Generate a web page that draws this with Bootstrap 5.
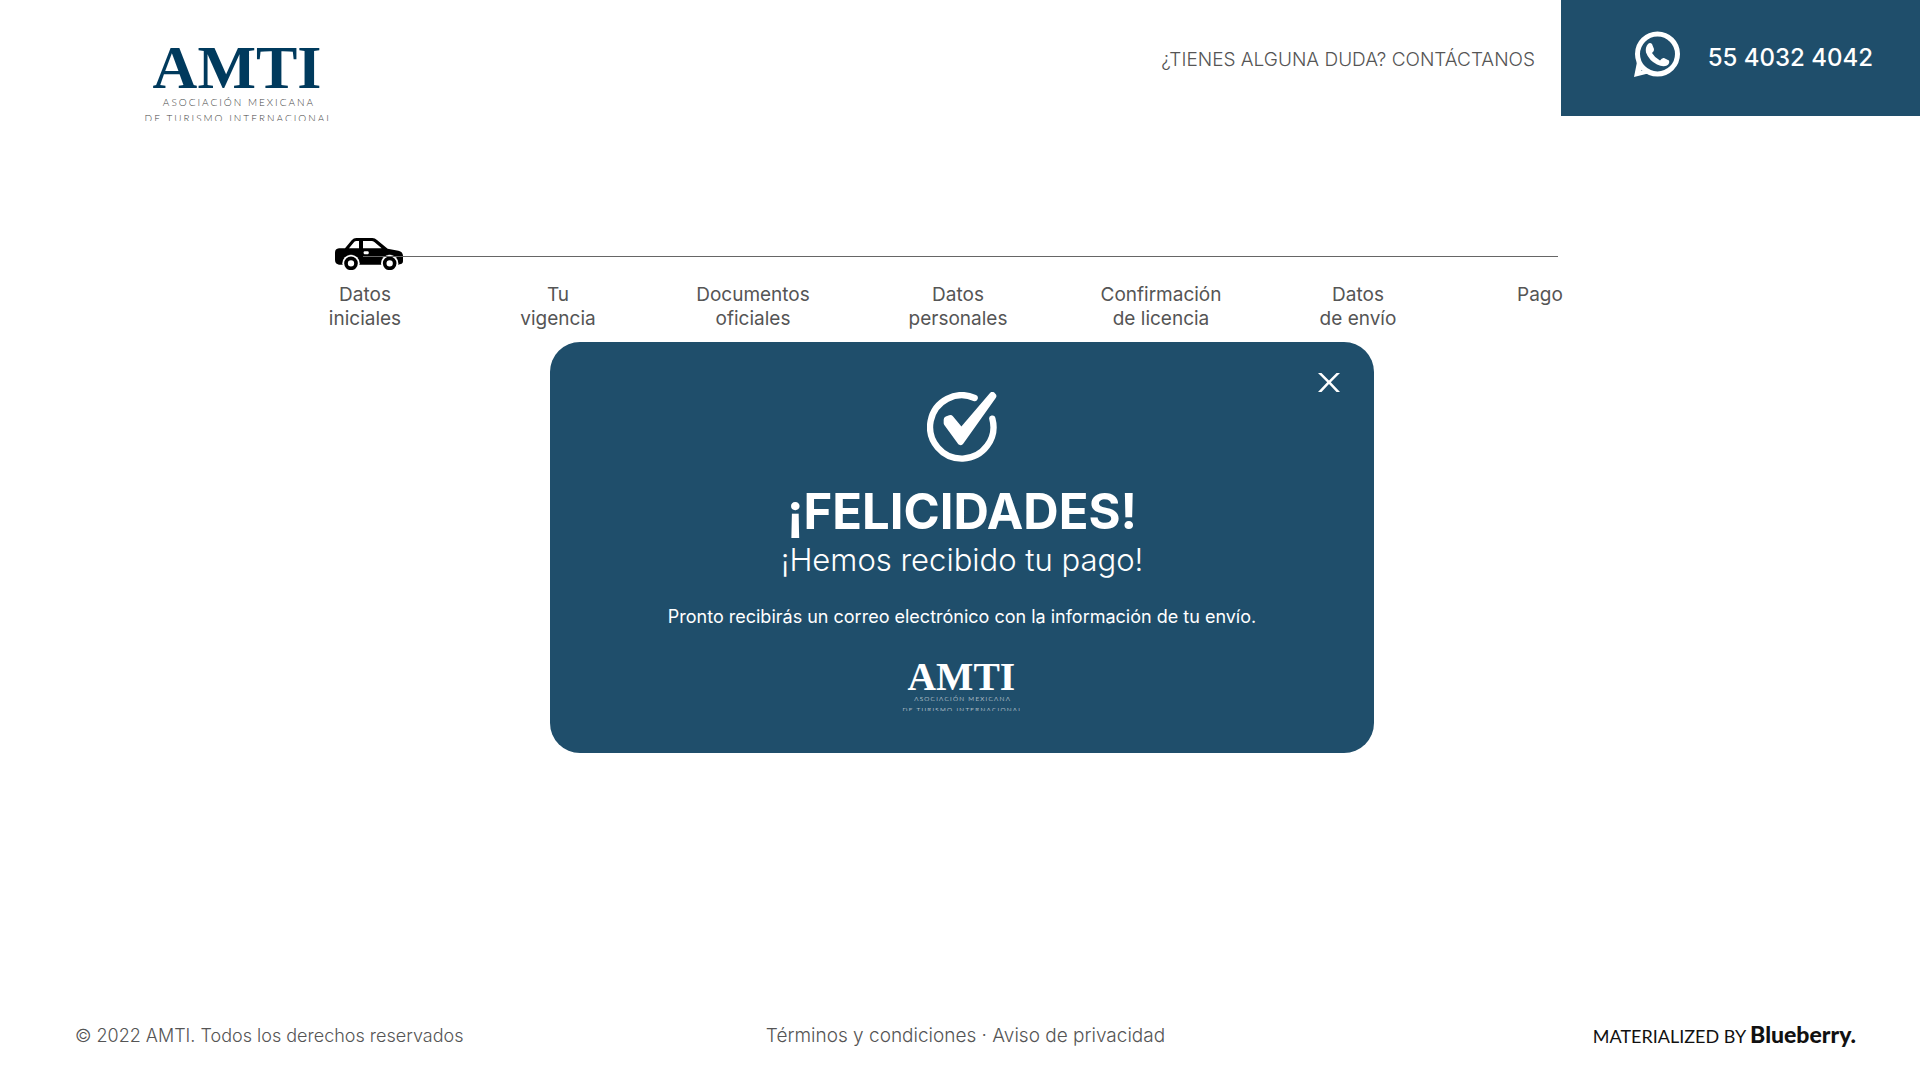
<!DOCTYPE html>
<html lang="es">
<head>
<meta charset="utf-8">
<meta name="viewport" content="width=device-width, initial-scale=1">
<title>AMTI - Pago recibido</title>
<link href="https://cdn.jsdelivr.net/npm/bootstrap@5.3.0/dist/css/bootstrap.min.css" rel="stylesheet">
<style>
:root { --brand: #1f4e6b; --ink: #555; }
body { font-family: Inter, sans-serif; font-size: 18px; line-height: 24px; color: var(--ink); background: #fff; }
a { color: inherit; text-decoration: none; }
.top-bar { height: 116px; }
.brand-link { margin: 41px 0 0 144px; }
.brand-link svg { width: 188px; height: 80px; display: block; }
.contact-link { font-weight: 300; font-size: 19px; margin-right: 26px; padding-top: 4px; }
.phone-box { width: 359px; background: var(--brand); color: #fff; font-size: 24px; font-weight: 500; padding: 0 47px 8px 0; gap: 28px; }
.phone-box span { padding-top: 8px; }
.track { margin-top: 122px; margin-left: 335px; margin-right: 362px; height: 32px; position: relative; }
.track-line { position: absolute; left: 28px; right: 0; top: 18px; height: 1px; background: #666; }
.steps { list-style: none; margin: 13px 300px 0 270px; padding: 0; display: grid; grid-template-columns: 190fr 196fr 194fr 216fr 190fr 204fr 160fr; text-align: center; font-size: 19px; }
.notice-row { padding: 11px 0 0 4px; }
.notice { width: 824px; max-width: 100%; background: var(--brand); color: #fff; border-radius: 30px; padding: 50px 24px 42px; position: relative; }
.close-x { position: absolute; top: 26px; right: 29px; line-height: 0; color: #fff; background: none; border: 0; padding: 5px; }
.notice-title { font-size: 49px; line-height: 56px; font-weight: 700; margin: 22px 0 0; }
.notice-sub { font-size: 31px; line-height: 40px; font-weight: 300; margin: 0; }
.notice-text { font-size: 18px; line-height: 24px; margin: 25px 0 0; }
.notice-logo { width: 120px; height: 51px; margin-top: 31px; }
.logo-name { font: 700 62px "Liberation Serif", serif; text-anchor: middle; }
.logo-tag { font: 300 10px Lato, sans-serif; letter-spacing: 2px; text-anchor: middle; }
.foot { padding: 0 64px 31px 75px; font-weight: 300; }
.legal { font-size: 19px; }
.credit { font-family: Lato, sans-serif; font-size: 18px; font-weight: 400; color: #111; }
.credit strong { font-size: 23px; font-weight: 900; }
</style>
<script src="https://cdn.jsdelivr.net/npm/bootstrap@5.3.0/dist/js/bootstrap.bundle.min.js" defer></script>
</head>
<body class="d-flex flex-column min-vh-100">
<header class="top-bar d-flex align-items-start">
  <a class="brand-link" href="#" aria-label="AMTI">
    <svg viewBox="0 0 188 80">
      <text class="logo-name" x="93" y="47" fill="#003a5d">AMTI</text>
      <text class="logo-tag" x="95" y="65" fill="#444">ASOCIACIÓN MEXICANA</text>
      <text class="logo-tag" x="95" y="81" fill="#444">DE TURISMO INTERNACIONAL</text>
    </svg>
  </a>
  <div class="ms-auto d-flex align-items-center h-100">
    <a class="contact-link" href="#">¿TIENES ALGUNA DUDA? CONTÁCTANOS</a>
    <a class="phone-box h-100 d-flex align-items-center justify-content-end" href="#">
      <svg width="46" height="46" viewBox="0 0 46 46" fill="#fff" aria-hidden="true">
        <circle cx="23.500" cy="23" r="20" fill="none" stroke="#fff" stroke-width="5"/>
        <path d="M0 46 3 31 9 37 7 40 12 38 18 43 12 43z"/>
        <path d="M14 13q2-2 4 0l2 5q.5 2-2 4q3 5 8 7.500q2-3 4-2.500l5 2.500q1 3-2 5q-4 2-10-1q-8-4-11-12q-1-5 2-8.500z"/>
      </svg>
      <span>55 4032 4042</span>
    </a>
  </div>
</header>

<main>
  <div class="track">
    <svg class="d-block" width="68" height="32" viewBox="0 0 204 96" aria-hidden="true">
      <path d="M0 44Q0 32 12 31H30L50 7Q56 0 64 0H112Q120 0 126 6L158 32 190 38Q204 41 204 54V70Q204 80 188 80H12Q0 78 0 66z"/>
      <g fill="#fff">
        <path d="M42 31 58 11Q60 9 64 9H72V31zM84 9H110Q114 9 118 12L140 31H84z"/>
        <rect x="86" y="40" width="15" height="9" rx="3"/>
        <circle cx="48" cy="76" r="26"/><circle cx="164" cy="76" r="26"/>
      </g>
      <circle cx="48" cy="76" r="15" fill="none" stroke="#000" stroke-width="11"/>
      <circle cx="164" cy="76" r="15" fill="none" stroke="#000" stroke-width="11"/>
    </svg>
    <div class="track-line"></div>
  </div>
  <ol class="steps">
    <li>Datos<br>iniciales</li>
    <li>Tu<br>vigencia</li>
    <li>Documentos<br>oficiales</li>
    <li>Datos<br>personales</li>
    <li>Confirmación<br>de licencia</li>
    <li>Datos<br>de envío</li>
    <li>Pago</li>
  </ol>
  <div class="notice-row d-flex justify-content-center">
    <section class="notice d-flex flex-column align-items-center text-center" role="dialog" aria-labelledby="notice-title">
      <button class="close-x" type="button" aria-label="Cerrar">
        <svg width="22" height="19" viewBox="0 0 22 19" fill="#fff" aria-hidden="true"><path d="M0 0H3.500L11 7.500 18.500 0H22L12.800 9.300 22 19H18.500L11 11 3.500 19H0L9.200 9.300z"/></svg>
      </button>
      <svg width="70" height="70" viewBox="0 0 210 210" aria-hidden="true">
        <path d="M143 18A95 95 0 1 0 196 80" fill="none" stroke="#fff" stroke-width="19" stroke-linecap="round"/>
        <path d="M198 12 101 149 60 93 60 83 70 79 103 119 196 10z" fill="#fff" stroke="#fff" stroke-width="20" stroke-linejoin="round"/>
      </svg>
      <h1 class="notice-title" id="notice-title">¡FELICIDADES!</h1>
      <h2 class="notice-sub">¡Hemos recibido tu pago!</h2>
      <p class="notice-text">Pronto recibirás un correo electrónico con la información de tu envío.</p>
      <svg class="notice-logo" viewBox="0 0 188 80" fill="#fff">
        <text class="logo-name" x="93" y="47">AMTI</text>
        <text class="logo-tag" x="95" y="65">ASOCIACIÓN MEXICANA</text>
        <text class="logo-tag" x="95" y="81">DE TURISMO INTERNACIONAL</text>
      </svg>
    </section>
  </div>
</main>

<footer class="foot mt-auto row gx-0 align-items-center">
  <div class="col">© 2022 AMTI. Todos los derechos reservados</div>
  <div class="col-auto legal"><a href="#">Términos y condiciones</a> · <a href="#">Aviso de privacidad</a></div>
  <div class="col text-end"><a class="credit" href="#">MATERIALIZED BY <strong>Blueberry.</strong></a></div>
</footer>
</body>
</html>
